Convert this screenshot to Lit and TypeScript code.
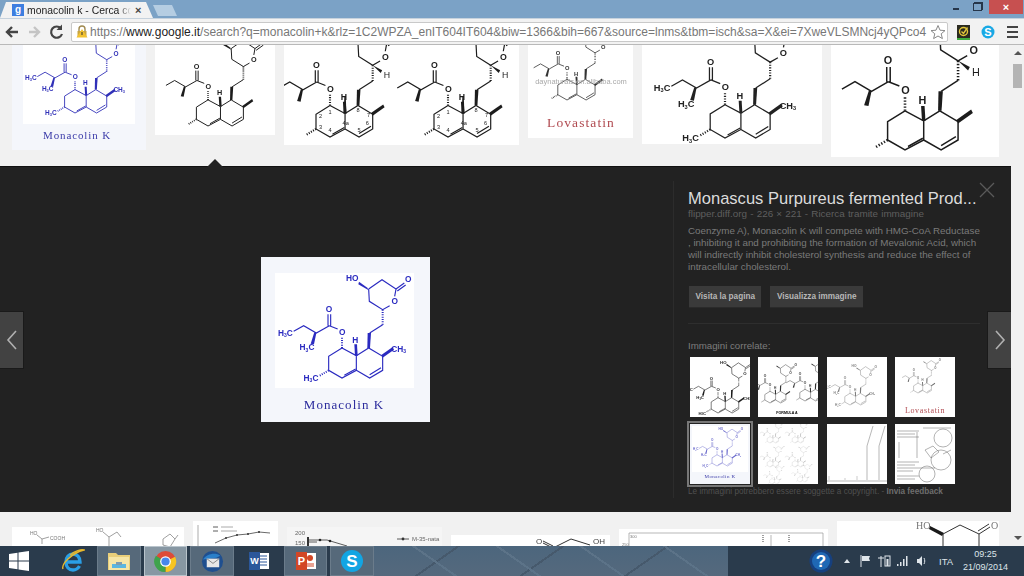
import { LitElement, html, svg, css } from 'lit';
import { customElement } from 'lit/decorators.js';

// one drawing of the molecule; every picture on the page is this skeleton at some scale
interface Mol {
  x: number;
  y: number;
  s: number;
  color?: string;
  labels?: boolean;
  numbers?: boolean;
  tailH?: boolean;
  faint?: number;
}

const BLUE = '#3030b8';
const INK = '#1c1c1c';

const NUMBERS: [string, number, number][] = [
  ['1', 275, 318], ['2', 248, 330], ['3', 248, 362], ['4', 275, 370], ['4a', 320, 350],
  ['5', 358, 370], ['6', 382, 352], ['7', 385, 328], ['8', 355, 315],
];

const mol = (m: Mol) => {
  const c = m.color ?? INK;
  return svg`<g transform="translate(${m.x} ${m.y}) scale(${m.s}) translate(-275 -385)" fill="none" stroke=${c} stroke-width="3.4" opacity=${m.faint ?? 1}>
    <path d="M355 118L395 90L437 118L433 140M418 168L397 180L357 155L355 118" />
    <path d="M437 118L462 100M441 124L466 106" />
    <path d="M397 180V225" stroke-dasharray="3 4" stroke-width="6" />
    <path d="M397 225L358 250" />
    <path d="M275 295L235 320V362L275 385L318 362V318L275 295M318 318L355 295L397 320V362L358 385L318 362" />
    <path d="M282 377L316 358M358 375L392 354" />
    <path d="M275 295V264" stroke-dasharray="3 4" stroke-width="6" />
    <path d="M262 238L237 228M233 228V194M241 228V194M237 228L198 250L160 228L130 245" />
    <path d="M235 362L205 380" stroke-dasharray="3 4" stroke-width="6" />
    <g fill=${c} stroke="none">
      <polygon points="352,250 362,250 359,295 351,295" />
      <polygon points="314,318 322,318 320,284 312,284" />
      <polygon points="397,324 393,316 427,292 431,300" />
      <polygon points="198,250 192,248 181,282 191,284" />
      <polygon points="355,122 351,114 326,96 324,104" />
      ${m.tailH ? svg`<polygon points="397,180 424,194 420,202" />` : ''}
    </g>
    <g fill=${c} stroke="none" font-size="25" font-family="Liberation Sans, sans-serif" font-weight="bold" text-anchor="middle">
      <text x="433" y="164">O</text>
      <text x="474" y="97">O</text>
      <text x="276" y="256">O</text>
      <text x="236" y="188">O</text>
      <text x="315" y="279">H</text>
      ${m.tailH ? svg`<text x="438" y="216" font-weight="normal">H</text>` : ''}
      ${m.labels ? svg`
        <text x="306" y="95">HO</text>
        <text x="445" y="306">CH<tspan font-size="15" dy="4">3</tspan></text>
        <text x="182" y="394">H<tspan font-size="15" dy="4">3</tspan><tspan dy="-4">C</tspan></text>
        <text x="170" y="302">H<tspan font-size="15" dy="4">3</tspan><tspan dy="-4">C</tspan></text>
        <text x="105" y="258">H<tspan font-size="15" dy="4">3</tspan><tspan dy="-4">C</tspan></text>` : ''}
      ${m.numbers ? NUMBERS.map(([t, x, y]) => svg`<text x=${x} y=${y} font-size="16" font-weight="normal">${t}</text>`) : ''}
    </g>
    ${m.numbers ? svg`<polygon points="314,318 322,318 320,270 316,270" fill=${c} stroke="none" />` : ''}
  </g>`;
};

const caption = (t: string, x: number, y: number, size: number, color: string) =>
  svg`<text x=${x} y=${y} font-size=${size} letter-spacing=${size * 0.08} fill=${color} text-anchor="middle" font-family="Liberation Serif, serif">${t}</text>`;

// small grey chart / document scribbles for the thumbnails and the row under the panel
const tinyGrid = svg`
  ${mol({ x: 12, y: 19, s: 0.07, color: '#888', faint: 0.7 })}${mol({ x: 37, y: 19, s: 0.07, color: '#888', faint: 0.7 })}
  ${mol({ x: 12, y: 43, s: 0.07, color: '#888', faint: 0.7 })}${mol({ x: 37, y: 43, s: 0.07, color: '#888', faint: 0.7 })}
  ${mol({ x: 14, y: 60, s: 0.06, color: '#999', faint: 0.7 })}${mol({ x: 42, y: 58, s: 0.06, color: '#999', faint: 0.7 })}`;

const peaks = svg`<path d="M0 57H60M40 22V56M52 22V56M40 22L46 2M52 22L58 2" fill="none" stroke="#999" stroke-width=".7" />
  <path d="M2 52V56M18 54V56M30 52V56" stroke="#aaa" stroke-width=".6" />`;

const sheet = svg`<g fill="none" stroke="#666" stroke-width=".5">
  <path d="M2 7H24M2 10H20M2 13H24M2 38H24M2 41H20M2 44H26M2 47H18M2 52H24M2 55H20M28 4H56M4 18V34M22 8V34" />
  <circle cx="48" cy="14" r="9" /><circle cx="46" cy="36" r="10" /><circle cx="32" cy="50" r="8" />
  <path d="M30 26L38 22L44 28L36 34ZM48 30L56 26M26 44H40" />
</g>`;

interface Shot {
  w: number;
  h: number;
  bg: string;
  art: unknown;
}

const TOP: Shot[] = [
  {
    w: 134, h: 105, bg: '#f4f6fb',
    art: svg`<rect x="11" width="112" height="79" fill="#fff" />
      ${mol({ x: 63, y: 68, s: 0.26, color: BLUE, labels: true })}
      ${caption('Monacolin K', 65, 94, 11, '#3a3aa8')}`,
  },
  { w: 120, h: 90, bg: '#fff', art: mol({ x: 53, y: 81, s: 0.29 }) },
  {
    w: 235, h: 100, bg: '#fff',
    art: svg`${mol({ x: 46, y: 92, s: 0.35, numbers: true, tailH: true })}${mol({ x: 164, y: 92, s: 0.35, numbers: true, tailH: true })}`,
  },
  {
    w: 105, h: 93, bg: '#fff',
    art: svg`${mol({ x: 39, y: 55, s: 0.23, color: '#333' })}
      <text x="53" y="39" font-size="7.5" fill="#aaa" text-anchor="middle" font-family="Liberation Sans, sans-serif">daynaturals.en.alibaba.com</text>
      ${caption('Lovastatin', 53, 82, 13.5, '#b04a50')}`,
  },
  { w: 180, h: 99, bg: '#fff', art: mol({ x: 83, y: 93, s: 0.37, labels: true, color: '#222' }) },
  { w: 168, h: 112, bg: '#fff', art: mol({ x: 74, y: 105, s: 0.435, tailH: true }) },
];

const RELATED: { art: unknown; bg?: string; on?: boolean }[] = [
  { art: mol({ x: 28, y: 56, s: 0.17, labels: true }) },
  {
    art: svg`${mol({ x: 12, y: 46, s: 0.13, color: '#333' })}${mol({ x: 47, y: 44, s: 0.13, color: '#333' })}
      <text x="29" y="57" font-size="3.6" font-weight="bold" text-anchor="middle" font-family="Liberation Sans, sans-serif">FORMULA A</text>`,
  },
  { art: mol({ x: 23, y: 48, s: 0.13, labels: true, color: '#444', faint: 0.7 }) },
  {
    art: svg`${mol({ x: 23, y: 36, s: 0.11, color: '#444', faint: 0.8 })}${caption('Lovastatin', 30, 56, 8, '#b04a50')}`,
  },
  {
    bg: '#f4f6fb', on: true,
    art: svg`<rect x="2" y="2" width="56" height="46" fill="#fff" />
      ${mol({ x: 27, y: 42, s: 0.125, color: BLUE, labels: true, faint: 0.75 })}
      ${caption('Monacolin K', 30, 54, 5, '#3a3aa8')}`,
  },
  { art: tinyGrid },
  { art: peaks },
  { art: sheet },
];

const LABEL = 'Liberation Sans, sans-serif';

const BOTTOM: { w: number; top: number; bg: string; art: unknown }[] = [
  {
    w: 172, top: 15, bg: '#fff',
    art: svg`<g fill="none" stroke="#777" stroke-width=".7">
        <path d="M25 8L30 12L37 10M30 12V17" /><path d="M91 5L97 10V20M97 10L105 5L109 10" />
        <path d="M151 12L158 7L163 12L158 20L151 18ZM163 12L166 8" />
      </g>
      <g fill="#777" font-size="5" font-family=${LABEL}>
        <text x="18" y="8">HO</text><text x="38" y="13">COOH</text><text x="84" y="5">HO</text>
      </g>`,
  },
  {
    w: 85, top: 9, bg: '#fff',
    art: svg`<path d="M5 4V30" stroke="#888" stroke-width=".7" />
      <path d="M22 22L33 17L44 14L55 13L66 11L77 12" fill="none" stroke="#444" stroke-width=".8" />
      <g fill="#333"><circle cx="33" cy="17" r="1" /><circle cx="44" cy="14" r="1" /><circle cx="55" cy="13" r="1" /><circle cx="66" cy="11" r="1" /></g>
      <path d="M20 6H25M20 10H25" stroke="#333" stroke-width=".8" />
      <path d="M28 6H40M28 10H44" stroke="#aaa" stroke-width="1" />`,
  },
  {
    w: 155, top: 15, bg: '#f5f5f5',
    art: svg`<g font-family=${LABEL} font-size="6" fill="#666">
        <text x="8" y="8">200</text><text x="8" y="18">150</text><text x="125" y="14">M-35-nata</text>
      </g>
      <path d="M20 13H40L60 19M20 15H30M110 12H122" fill="none" stroke="#333" stroke-width=".8" />
      <circle cx="116" cy="12" r="1.4" fill="#333" /><circle cx="33" cy="13" r="1.3" fill="#222" /><circle cx="43" cy="14" r="1.3" fill="#222" />
      <rect x="20" y="10" width="2" height="10" fill="#333" />`,
  },
  {
    w: 159, top: 23, bg: '#fff',
    art: svg`<path d="M92 8L102 13L120 4L139 10M92 6L102 11" fill="none" stroke="#333" stroke-width="1" />
      <g font-family=${LABEL} font-size="8" fill="#444"><text x="85" y="9">O</text><text x="142" y="9">OH</text></g>`,
  },
  {
    w: 209, top: 17, bg: '#fff',
    art: svg`<path d="M10 4H204V17M10 4V17M152 6V17" fill="none" stroke="#999" stroke-width=".7" />
      <path d="M144 6V14M170 6V14" stroke="#777" stroke-width="1.4" stroke-dasharray="1 1" />
      <g font-family=${LABEL} font-size="4" fill="#777"><text x="11" y="9">300</text><text x="3" y="17">250</text></g>`,
  },
  {
    w: 162, top: 9, bg: '#fff',
    art: svg`<polygon points="93,5 107,12 105,15 92,8" fill="#1a1a1a" />
      <path d="M106 13L123 4L142 13L153 6M141 10L152 3M106 13V30M142 13V30" fill="none" stroke="#333" stroke-width="1" />
      <g font-family="Liberation Serif, serif" font-size="10" fill="#777"><text x="79" y="8">HO</text><text x="154" y="8">O</text></g>`,
  },
];

@customElement('app-root')
export class AppRoot extends LitElement {
  static styles = css`
    :host {
      display: flex;
      flex-direction: column;
      width: 1024px;
      height: 576px;
      overflow: hidden;
      background: #f1f1f1;
      font-family: 'Liberation Sans', Arial, sans-serif;
    }
    svg { display: block; }
    .shot { flex: none; filter: blur(0.3px); }

    .titlebar {
      display: flex;
      height: 18px;
      flex: none;
      background: #7ba2c6;
    }
    .tab {
      display: flex;
      align-items: center;
      width: 153px;
      padding: 2px 0 0 12px;
      box-sizing: border-box;
      background: #f2f2f2;
      clip-path: polygon(0 100%, 6px 2px, 146px 2px, 153px 100%);
      font-size: 10.4px;
      color: #222;
      white-space: nowrap;
    }
    .favicon {
      width: 12px;
      height: 12px;
      margin-right: 3px;
      background: #3d7ee0;
      color: #fff;
      font-size: 10px;
      font-weight: bold;
      line-height: 12px;
      text-align: center;
      flex: none;
    }
    .tab-title {
      width: 104px;
      overflow: hidden;
      -webkit-mask-image: linear-gradient(90deg, #000 88%, transparent);
      mask-image: linear-gradient(90deg, #000 88%, transparent);
    }
    .tab-x { margin-left: 4px; font-size: 11px; font-weight: bold; color: #444; }
    .newtab {
      width: 24px;
      height: 11px;
      margin: 5px 0 0 0;
      background: #b5cde2;
      clip-path: polygon(0 0, 19px 0, 24px 100%, 5px 100%);
    }
    .winctl {
      display: flex;
      margin-left: auto;
      margin-right: 1px;
      height: 14px;
      align-items: center;
    }
    .min { width: 6px; height: 2px; margin-top: 4px; background: #26364a; }
    .restore { width: 7px; height: 6px; margin: 0 7px 0 14px; border: 1px solid #26364a; box-shadow: 1px -1px 0 #26364a; }
    .close {
      width: 34px;
      height: 14px;
      background: #c75050;
      color: #fff;
      font-size: 11px;
      font-weight: bold;
      line-height: 14px;
      text-align: center;
    }

    .toolbar {
      display: flex;
      align-items: center;
      height: 27px;
      flex: none;
      box-sizing: border-box;
      background: #f2f2f2;
      border-top: 1px solid #c6d2dd;
      border-bottom: 1px solid #b9b9b9;
    }
    .navicons { width: 71px; flex: none; }
    .omnibox {
      display: flex;
      align-items: center;
      width: 877px;
      height: 20px;
      flex: none;
      box-sizing: border-box;
      padding-left: 4px;
      background: #fff;
      border: 1px solid #c9c9c9;
      border-radius: 2px;
      font-size: 12px;
      color: #777;
      white-space: nowrap;
      overflow: hidden;
    }
    .omnibox b { font-weight: normal; color: #222; }
    .url { margin-left: 2px; width: 842px; overflow: hidden; }
    .star { margin-left: auto; flex: none; }
    .exts { display: flex; align-items: center; flex: none; margin-left: 9px; }

    .page {
      position: relative;
      flex: 1;
      min-height: 0;
      display: flex;
      flex-direction: column;
      overflow: hidden;
    }
    .row {
      display: flex;
      align-items: flex-start;
      gap: 9px;
      padding-left: 12px;
      overflow: hidden;
    }
    .row.top { height: 121px; flex: none; }
    .row.bottom { height: 34px; flex: none; }
    .scroll {
      position: absolute;
      top: 0;
      right: 0;
      bottom: 0;
      width: 13px;
      background: #f1f1f1;
    }
    .thumb-bar { position: absolute; top: 19px; left: 2px; width: 9px; height: 24px; background: #b4b4b4; }
    .up, .down { position: absolute; left: 3px; width: 0; height: 0; border: 4px solid transparent; }
    .up { top: 2px; border-bottom-color: #555; }
    .down { bottom: 2px; border-top-color: #555; }

    .panel {
      position: relative;
      display: flex;
      width: 1011px;
      height: 346px;
      flex: none;
      background: #222;
      border-top: 1px solid #111;
      box-sizing: border-box;
    }
    .notch {
      position: absolute;
      top: -8px;
      left: 207px;
      width: 0;
      height: 0;
      border: 8px solid transparent;
      border-top: 0;
      border-bottom-color: #222;
    }
    .stage {
      display: flex;
      align-items: center;
      justify-content: center;
      width: 673px;
      padding-left: 18px;
      box-sizing: border-box;
      flex: none;
    }
    .side {
      flex: 1;
      margin: 14px 0 14px;
      padding: 8px 0 0 14px;
      border-left: 1px solid #2c2c2c;
    }
    .title { font-size: 16.55px; line-height: 20px; color: #dcdcdc; white-space: nowrap; }
    .meta { margin-top: -1px; font-size: 9.9px; word-spacing: 0.4px; line-height: 12px; color: #5f5f5f; white-space: nowrap; }
    .desc { margin-top: 5px; width: 300px; font-size: 9.8px; line-height: 12px; color: #7a7a7a; white-space: nowrap; }
    .btns { display: flex; gap: 9px; margin: 13px 0 0 1px; }
    .btn {
      height: 22px;
      padding: 0 6.5px;
      background: #3a3a3a;
      border-bottom: 1px solid #2a2a2a;
      box-sizing: border-box;
      font-size: 8.2px;
      font-weight: bold;
      line-height: 21px;
      color: #b8b8b8;
    }
    .rule { width: 292px; margin-top: 15px; border-top: 1px solid #2e2e2e; }
    .rel { margin-top: 15px; font-size: 9.7px; line-height: 14px; color: #7d7d7d; }
    .grid {
      display: grid;
      grid-template-columns: repeat(4, 60px);
      column-gap: 8.33px;
      row-gap: 7px;
      margin: 4px 0 0 2px;
    }
    .cell { width: 60px; height: 60px; background: #fff; filter: blur(0.3px); }
    .cell.on { outline: 2px solid #777; outline-offset: 1px; }
    .foot { margin-top: 2px; font-size: 8.2px; line-height: 12px; color: #505050; white-space: nowrap; }
    .foot b { color: #6e6e6e; }
    .nav {
      position: absolute;
      top: 144px;
      width: 24px;
      height: 58px;
      box-sizing: border-box;
      background: #424242;
      border-top: 1px solid #1a1a1a;
      border-bottom: 1px solid #1a1a1a;
    }
    .nav.prev { left: 0; border-right: 1px solid #1a1a1a; }
    .nav.next { right: 0; border-left: 1px solid #1a1a1a; }
    .x { position: absolute; top: 15px; right: 16px; }

    .taskbar {
      display: flex;
      align-items: center;
      height: 30px;
      flex: none;
      background: #2a3b4c;
      color: #dfe5ea;
    }
    .start { display: flex; justify-content: center; width: 38px; flex: none; }
    .ie { display: flex; justify-content: center; width: 48px; padding-left: 11px; flex: none; }
    .apps { display: flex; gap: 3px; height: 30px; flex: none; }
    .app {
      display: flex;
      align-items: center;
      justify-content: center;
      width: 43.7px;
      height: 30px;
      box-sizing: border-box;
    }
    .app.open { background: #56697a; border: 1px solid #6b7c8b; }
    .app.active { background: #8797a3; border: 1px solid #b9c4cc; }
    .wall {
      flex: 1;
      height: 30px;
      background:
        repeating-linear-gradient(35deg, transparent 0 46px, #5c7388 46px 48px),
        repeating-linear-gradient(-35deg, transparent 0 58px, #46596c 58px 60px),
        linear-gradient(#4c667d, #55697d);
    }
    .tray {
      display: flex;
      align-items: center;
      width: 296px;
      flex: none;
    }
    .help { margin-left: 81px; }
    .tray-icons { margin-left: 4px; }
    .lang { margin-left: 12px; font-size: 9.5px; }
    .clock { margin-left: 10px; font-size: 9px; line-height: 13px; text-align: center; }
  `;

  private photo(s: Shot) {
    return html`<svg class="shot" width=${s.w} height=${s.h} style="background:${s.bg}">${s.art}</svg>`;
  }

  render() {
    return html`
      <div class="titlebar">
        <div class="tab">
          <span class="favicon">g</span>
          <span class="tab-title">monacolin k - Cerca con Google</span>
          <span class="tab-x">×</span>
        </div>
        <div class="newtab"></div>
        <div class="winctl">
          <div class="min"></div>
          <div class="restore"></div>
          <div class="close">×</div>
        </div>
      </div>

      <div class="toolbar">
        <svg class="navicons" width="71" height="20" viewBox="0 0 71 20" fill="none">
          <path d="M18 10H7M12 5L7 10L12 15" stroke="#444" stroke-width="2.4" />
          <path d="M29 10H39M34 5L39 10L34 15" stroke="#c4c4c4" stroke-width="2.4" />
          <path d="M62 12A5.6 5.6 0 1 1 61 6.500" stroke="#444" stroke-width="2.2" />
          <path d="M62 2.500V8H56.500Z" fill="#444" />
        </svg>
        <div class="omnibox">
          <svg width="12" height="13" viewBox="0 0 12 13" style="flex:none">
            <path d="M3 6V4A3 3 0 0 1 9 4V6" fill="none" stroke="#a08a50" stroke-width="1.4" />
            <rect x="1.500" y="6" width="9" height="6" fill="#c9a640" />
            <path d="M6 4L11.500 12.500H.5Z" fill="#f2c230" />
            <path d="M6 7V10" stroke="#333" />
          </svg>
          <span class="url">https://<b>www.google.it</b>/search?q=monacolin+k&rlz=1C2WPZA_enIT604IT604&biw=1366&bih=667&source=lnms&tbm=isch&sa=X&ei=7XweVLSMNcj4yQPco4</span>
          <svg class="star" width="16" height="16" viewBox="0 0 16 16" style="margin-right:1px">
            <path d="M8 1.500L10 6.200L15 6.600L11.200 9.800L12.400 14.600L8 12L3.600 14.600L4.800 9.800L1 6.600L6 6.200Z" fill="none" stroke="#888" />
          </svg>
        </div>
        <div class="exts">
          <svg width="66" height="18" viewBox="0 0 66 18">
            <rect x="0" y="2" width="13" height="13" fill="#2b2b20" />
            <rect x="0" y="15" width="13" height="2" fill="#3fae3f" />
            <circle cx="6.500" cy="8.500" r="4" fill="none" stroke="#e3c73a" stroke-width="1.4" />
            <path d="M4.500 8.500L6.500 10.500L10.500 4.500" fill="none" stroke="#e3c73a" stroke-width="1.4" />
            <circle cx="31" cy="9" r="6.500" fill="#19a9e5" />
            <text x="31" y="13" font-size="11" font-weight="bold" fill="#fff" text-anchor="middle">S</text>
            <path d="M50 4H61M50 9H61M50 14H61" stroke="#444" stroke-width="2" />
          </svg>
        </div>
      </div>

      <div class="page">
        <div class="row top">${TOP.map((s) => this.photo(s))}</div>

        <div class="panel">
          <div class="notch"></div>
          <div class="stage">
            ${this.photo({
              w: 169, h: 165, bg: '#f4f6fb',
              art: svg`<rect x="14" y="16" width="139" height="115" fill="#fff" />
                ${mol({ x: 81, y: 121, s: 0.3333, color: '#2a2ac0', labels: true })}
                ${caption('Monacolin K', 83, 152, 13, '#2a2a9c')}`,
            })}
          </div>
          <div class="side">
            <div class="title">Monascus Purpureus fermented Prod...</div>
            <div class="meta">flipper.diff.org - 226 × 221 - Ricerca tramite immagine</div>
            <div class="desc">
              Coenzyme A), Monacolin K will compete with HMG-CoA Reductase<br />
              , inhibiting it and prohibiting the formation of Mevalonic Acid, which<br />
              will indirectly inhibit cholesterol synthesis and reduce the effect of<br />
              intracellular cholesterol.
            </div>
            <div class="btns">
              <div class="btn">Visita la pagina</div>
              <div class="btn">Visualizza immagine</div>
            </div>
            <div class="rule"></div>
            <div class="rel">Immagini correlate:</div>
            <div class="grid">
              ${RELATED.map((r) => html`<svg class="cell ${r.on ? 'on' : ''}" width="60" height="60" style=${r.bg ? `background:${r.bg}` : ''}>${r.art}</svg>`)}
            </div>
            <div class="foot">Le immagini potrebbero essere soggette a copyright. - <b>Invia feedback</b></div>
          </div>
          <svg class="x" width="16" height="16" viewBox="0 0 16 16"><path d="M1 1L15 15M15 1L1 15" stroke="#5a5a5a" stroke-width="1.3" /></svg>
          <div class="nav prev">
            <svg width="23" height="56" viewBox="0 0 23 56"><path d="M16 19L8 28L16 37" fill="none" stroke="#b0b0b0" stroke-width="1.6" /></svg>
          </div>
          <div class="nav next">
            <svg width="23" height="56" viewBox="0 0 23 56"><path d="M8 19L16 28L8 37" fill="none" stroke="#b0b0b0" stroke-width="1.6" /></svg>
          </div>
        </div>

        <div class="row bottom">
          ${BOTTOM.map((b) => html`<svg class="shot" width=${b.w} height="40" style="background:${b.bg};margin-top:${b.top}px">${b.art}</svg>`)}
        </div>

        <div class="scroll">
          <div class="up"></div>
          <div class="thumb-bar"></div>
          <div class="down"></div>
        </div>
      </div>

      <div class="taskbar">
        <div class="start">
          <svg width="20" height="20" viewBox="0 0 20 20" fill="#fff">
            <path d="M0 3L8.500 1.800V9.500H0ZM9.500 1.600L20 0V9.500H9.500ZM0 10.500H8.500V18.200L0 17ZM9.500 10.500H20V20L9.500 18.400Z" />
          </svg>
        </div>
        <div class="ie">
          <svg width="24" height="24" viewBox="0 0 24 24" fill="none">
            <path d="M6 13H19C19 8 16 5 12 5C8 5 5 8 5 13C5 18 8 21 12 21C15 21 17 19.500 18.500 17" stroke="#2a9fe6" stroke-width="3.4" />
            <path d="M2 20C0 15 11 4 23 1C20 0 14 2 9 6" stroke="#e9b92c" stroke-width="1.4" />
          </svg>
        </div>
        <div class="apps">
          <div class="app open">
            <svg width="24" height="22" viewBox="0 0 24 22">
              <path d="M1 3H9L11 5H23V20H1Z" fill="#e9cf7a" />
              <rect x="2" y="7" width="20" height="13" fill="#f6e6a6" />
              <rect x="5" y="14" width="14" height="4" fill="#5bb6e0" />
              <rect x="9" y="12" width="6" height="3" fill="#7f9db0" />
            </svg>
          </div>
          <div class="app active">
            <svg width="23" height="23" viewBox="0 0 24 24">
              <circle cx="12" cy="12" r="11" fill="#dd4b39" />
              <path d="M12 12L22 7A11 11 0 0 1 12 23Z" fill="#f6c521" />
              <path d="M12 12L12 23A11 11 0 0 1 2 6Z" fill="#3fa34d" />
              <circle cx="12" cy="12" r="5.600" fill="#fff" />
              <circle cx="12" cy="12" r="4.300" fill="#4787ed" />
            </svg>
          </div>
          <div class="app open">
            <svg width="23" height="23" viewBox="0 0 24 24">
              <circle cx="12" cy="12" r="11" fill="#1f4f8f" />
              <path d="M2 10C6 4 15 2 20 6L16 8Z" fill="#2a7fc9" />
              <rect x="6" y="9" width="13" height="9" fill="#e7e7e7" />
              <path d="M6 9L12.500 14L19 9" fill="none" stroke="#888" />
            </svg>
          </div>
          <div class="app">
            <svg width="22" height="22" viewBox="0 0 22 22">
              <rect x="8" y="3" width="13" height="16" fill="#fff" />
              <path d="M10 6H19M10 9H19M10 12H19M10 15H19" stroke="#2b579a" />
              <rect x="1" y="2" width="11" height="18" fill="#2b579a" />
              <text x="6.500" y="14" font-size="9" font-weight="bold" fill="#fff" text-anchor="middle">W</text>
            </svg>
          </div>
          <div class="app open">
            <svg width="22" height="22" viewBox="0 0 22 22">
              <rect x="8" y="3" width="13" height="16" fill="#fff" />
              <circle cx="15" cy="8" r="3" fill="#d24726" />
              <path d="M11 14H19M11 16H19" stroke="#d24726" />
              <rect x="1" y="2" width="11" height="18" fill="#d24726" />
              <text x="6.500" y="15" font-size="11" font-weight="bold" fill="#fff" text-anchor="middle">P</text>
            </svg>
          </div>
          <div class="app open">
            <svg width="24" height="24" viewBox="0 0 24 24">
              <circle cx="12" cy="12" r="11" fill="#12a5e3" />
              <text x="12" y="18" font-size="17" font-weight="bold" fill="#fff" text-anchor="middle">S</text>
            </svg>
          </div>
        </div>
        <div class="wall"></div>
        <div class="tray">
          <svg class="help" width="24" height="24" viewBox="0 0 24 24">
            <circle cx="12" cy="12" r="11.500" fill="#16407f" />
            <circle cx="12" cy="12" r="9" fill="#1f68b4" />
            <text x="12" y="18" font-size="17" font-weight="bold" fill="#fff" text-anchor="middle">?</text>
          </svg>
          <svg class="tray-icons" width="90" height="16" viewBox="0 0 90 16" fill="#dfe5ea">
            <path d="M7 10L10 6L13 10Z" />
            <path d="M24 2V14" stroke="#dfe5ea" /><path d="M25 3H33L32 5.500L33 8H25Z" />
            <path d="M44 3V14M41 5H47" stroke="#dfe5ea" /><rect x="48" y="3" width="5" height="10" fill="none" stroke="#dfe5ea" /><rect x="49.500" y="6" width="2" height="7" />
            <rect x="60" y="11" width="1.500" height="2" /><rect x="63" y="9" width="1.500" height="4" /><rect x="66" y="6" width="1.500" height="7" /><rect x="69" y="3" width="1.500" height="10" />
            <path d="M80 6H82L85 3V13L82 10H80Z" /><path d="M87 5C88 7 88 9 87 11" fill="none" stroke="#dfe5ea" />
          </svg>
          <span class="lang">ITA</span>
          <div class="clock">09:25<br />21/09/2014</div>
        </div>
      </div>
    `;
  }
}
